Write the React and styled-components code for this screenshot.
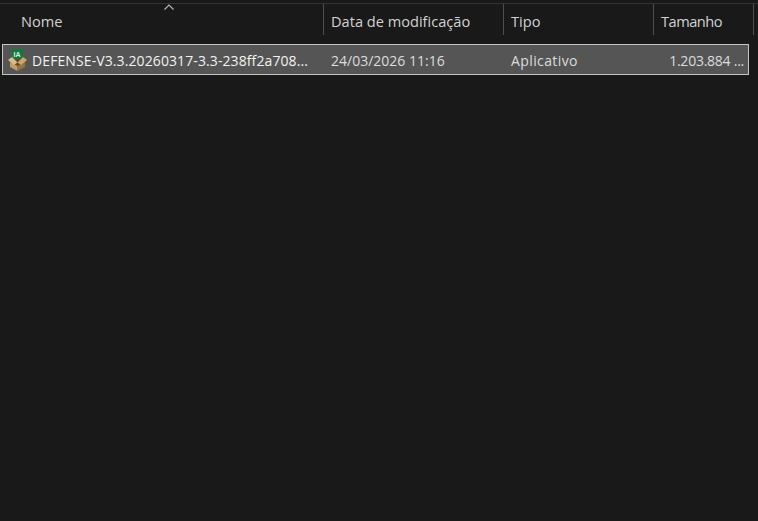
import React from 'react';
import styled, { createGlobalStyle } from 'styled-components';

const GlobalStyle = createGlobalStyle`
  html, body {
    margin: 0;
    padding: 0;
    background: #191919;
  }
`;

const Page = styled.div`
  width: 758px;
  height: 521px;
  overflow: hidden;
  background: #191919;
  font-family: "Open Sans", "Noto Sans", sans-serif;
  font-size: 14px;
`;

const TopLine = styled.div`
  height: 1px;
  margin-top: 3px;
  background: #333333;
`;

const Header = styled.div`
  display: grid;
  grid-template-columns: 324px 180px 150px 100px;
  position: relative;
  height: 31px;
  margin-bottom: 9px;
`;

const HeaderCell = styled.div`
  display: flex;
  align-items: center;
  height: 31px;
  padding-left: ${(p) => p.$pad || 7}px;
  padding-top: 2px;
  box-sizing: border-box;
  font-size: 14.6px;
  letter-spacing: ${(p) => p.$spacing || 0}px;
  color: #d2d2d2;
  border-right: 1px solid #4d4d4d;
  white-space: nowrap;
`;

const SortArrow = styled.svg`
  position: absolute;
  left: 163px;
  top: 0;
`;

const Row = styled.div`
  display: grid;
  grid-template-columns: 321px 180px 150px 94px;
  align-items: center;
  width: 747px;
  height: 31px;
  margin-left: 2px;
  padding-top: 1px;
  box-sizing: border-box;
  background: #555555;
  border: 1px solid #c4c4c4;
  color: #dcdcdc;
`;

const NameCell = styled.div`
  display: flex;
  align-items: center;
  gap: 3px;
  padding-left: 4px;
  color: #f2f2f2;
  letter-spacing: 0.1px;
  white-space: nowrap;
`;

const Cell = styled.div`
  padding-left: 7px;
  letter-spacing: ${(p) => p.$spacing || 0}px;
  white-space: nowrap;
`;

const SizeCell = styled(Cell)`
  padding: 0 4px 0 0;
  text-align: right;
`;

const ArchiveIcon = styled.svg`
  flex: none;
`;

const BoxIcon = () => (
  <ArchiveIcon width="22" height="22" viewBox="0 0 22 22">
    <path d="M5 8 L16 8 L18 13 L10.5 17 L3 13 Z" fill="#5f4826" />
    <path d="M3 13 L10.5 17 L10.5 22 L3 18 Z" fill="#c39d66" />
    <path d="M18 13 L10.5 17 L10.5 22 L18 18 Z" fill="#96743f" />
    <rect x="4" y="0" width="12" height="10" rx="1.5" fill="#15773f" />
    <text x="10" y="7.5" fontSize="7" fontWeight="700" fill="#d4efdc" textAnchor="middle" fontFamily="Liberation Sans, sans-serif">IA</text>
    <path d="M1 11 L5 8 L10.5 13.5 L7 16 Z" fill="#dcbd8a" />
    <path d="M20 11 L16 8 L10.5 13.5 L14 16 Z" fill="#c8a670" />
  </ArchiveIcon>
);

export default function App() {
  return (
    <Page>
      <GlobalStyle />
      <TopLine />
      <Header>
        <HeaderCell $pad={21}>Nome</HeaderCell>
        <HeaderCell>Data de modificação</HeaderCell>
        <HeaderCell>Tipo</HeaderCell>
        <HeaderCell $spacing={-0.5}>Tamanho</HeaderCell>
        <SortArrow width="12" height="7" viewBox="0 0 12 7">
          <path d="M1.5 5.5 L6 1 L10.5 5.5" fill="none" stroke="#b4b4b4" strokeWidth="1.2" />
        </SortArrow>
      </Header>
      <Row>
        <NameCell>
          <BoxIcon />
          DEFENSE-V3.3.20260317-3.3-238ff2a708...
        </NameCell>
        <Cell>24/03/2026 11:16</Cell>
        <Cell $spacing={0.4}>Aplicativo</Cell>
        <SizeCell $spacing={-0.25}>1.203.884 ...</SizeCell>
      </Row>
    </Page>
  );
}
